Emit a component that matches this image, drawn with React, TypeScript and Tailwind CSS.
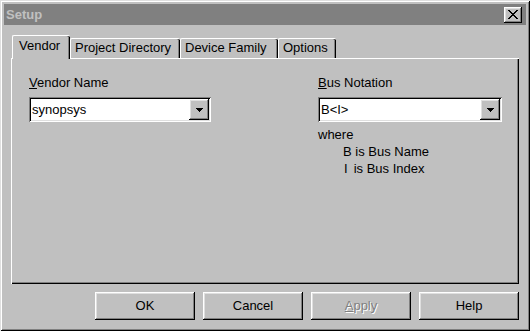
import React from 'react';

const raised =
  'shadow-[inset_-1px_-1px_0_#000,inset_1px_1px_0_#fff,inset_-2px_-2px_0_#808080,inset_2px_2px_0_#dfdfdf]';
const sunken =
  'shadow-[inset_1px_1px_0_#808080,inset_-1px_-1px_0_#fff,inset_2px_2px_0_#000,inset_-2px_-2px_0_#dfdfdf]';

function Combo({ value, width }: { value: string; width: string }) {
  return (
    <div className={`${width} h-[25px] bg-white p-[2px] flex items-stretch ${sunken}`}>
      <div className="flex-1 pl-[1px] flex items-center">{value}</div>
      <div className={`w-[20px] bg-[#c0c0c0] flex items-center justify-center ${raised}`}>
        <svg width="7" height="4" viewBox="0 0 7 4">
          <path d="M0 0h7v1h-1v1h-1v1h-1v1h-1v-1h-1v-1h-1v-1h-1z" fill="#000" />
        </svg>
      </div>
    </div>
  );
}

function Tab({ label, width, active }: { label: string; width: string; active?: boolean }) {
  if (active) {
    return (
      <div
        className={`${width} h-[24px] -mb-[1px] relative z-10 bg-[#c0c0c0] border-t border-l border-white rounded-tl-[2px] rounded-tr-[2px] shadow-[inset_-1px_0_0_#000,inset_-2px_0_0_#808080] pl-[6px] pt-[2px]`}
      >
        {label}
      </div>
    );
  }
  return (
    <div
      className={`${width} h-[20px] bg-[#c0c0c0] border-t border-l border-white rounded-tl-[2px] rounded-tr-[2px] shadow-[inset_-1px_0_0_#000,inset_-2px_0_0_#808080] pl-[4px] pt-[1px]`}
    >
      {label}
    </div>
  );
}

function Button({ children, disabled }: { children: React.ReactNode; disabled?: boolean }) {
  return (
    <div
      className={`w-[100px] h-[28px] flex items-center justify-center ${raised} ${
        disabled ? 'text-[#808080] [text-shadow:1px_1px_0_#fff]' : ''
      }`}
    >
      {children}
    </div>
  );
}

export default function App() {
  return (
    <div className="w-[530px] h-[331px] bg-[#c0c0c0] p-[4px] flex flex-col font-['Liberation_Sans',Arial,sans-serif] text-[13px] leading-[16px] text-black shadow-[inset_1px_1px_0_#dfdfdf,inset_-1px_-1px_0_#000,inset_2px_2px_0_#fff,inset_-2px_-2px_0_#808080]">
      {/* title bar */}
      <div className="h-[21px] bg-[#808080] flex items-center justify-between pl-[2px] pr-[4px]">
        <span className="font-bold text-[#c0c0c0] text-[13px]">Setup</span>
        <div className={`w-[18px] h-[16px] bg-[#c0c0c0] flex items-center justify-center ${raised}`}>
          <svg width="10" height="9" viewBox="0 0 10 9" shapeRendering="crispEdges">
            <path
              d="M0 0h2v1h1v1h1v1h2v-1h1v-1h1v-1h2v1h-1v1h-1v1h-1v1h-1v1h1v1h1v1h1v1h1v1h-2v-1h-1v-1h-1v-1h-2v1h-1v1h-1v1h-2v-1h1v-1h1v-1h1v-1h1v-1h-1v-1h-1v-1h-1v-1h-1z"
              fill="#000"
            />
          </svg>
        </div>
      </div>

      {/* tab control */}
      <div className="ml-[7px] mt-[10px] w-[508px] flex flex-col">
        <div className="flex items-end h-[23px] pl-[1px]">
          <Tab label="Vendor" width="w-[58px]" active />
          <Tab label="Project Directory" width="w-[110px]" />
          <Tab label="Device Family" width="w-[98px]" />
          <Tab label="Options" width="w-[58px]" />
        </div>
        <div className="h-[226px] border-t border-l border-white shadow-[inset_-1px_-1px_0_#000,inset_-2px_-2px_0_#808080] pl-[17px] pt-[16px] flex">
          <div className="w-[289px] flex flex-col">
            <div className="mb-[6px]">
              <u>V</u>endor Name
            </div>
            <Combo value="synopsys" width="w-[182px]" />
          </div>
          <div className="flex flex-col">
            <div className="mb-[6px]">
              <u>B</u>us Notation
            </div>
            <Combo value="B<I>" width="w-[184px]" />
            <div className="mt-[4px] leading-[17px]">
              <div>where</div>
              <div className="pl-[25px]">B is Bus Name</div>
              <div className="pl-[26px]">
                I<span className="ml-[6px]">is Bus Index</span>
              </div>
            </div>
          </div>
        </div>
      </div>

      {/* buttons */}
      <div className="flex justify-end gap-[8px] mt-[8px] pr-[7px]">
        <Button>OK</Button>
        <Button>Cancel</Button>
        <Button disabled>
          <u>A</u>pply
        </Button>
        <Button>Help</Button>
      </div>
    </div>
  );
}
